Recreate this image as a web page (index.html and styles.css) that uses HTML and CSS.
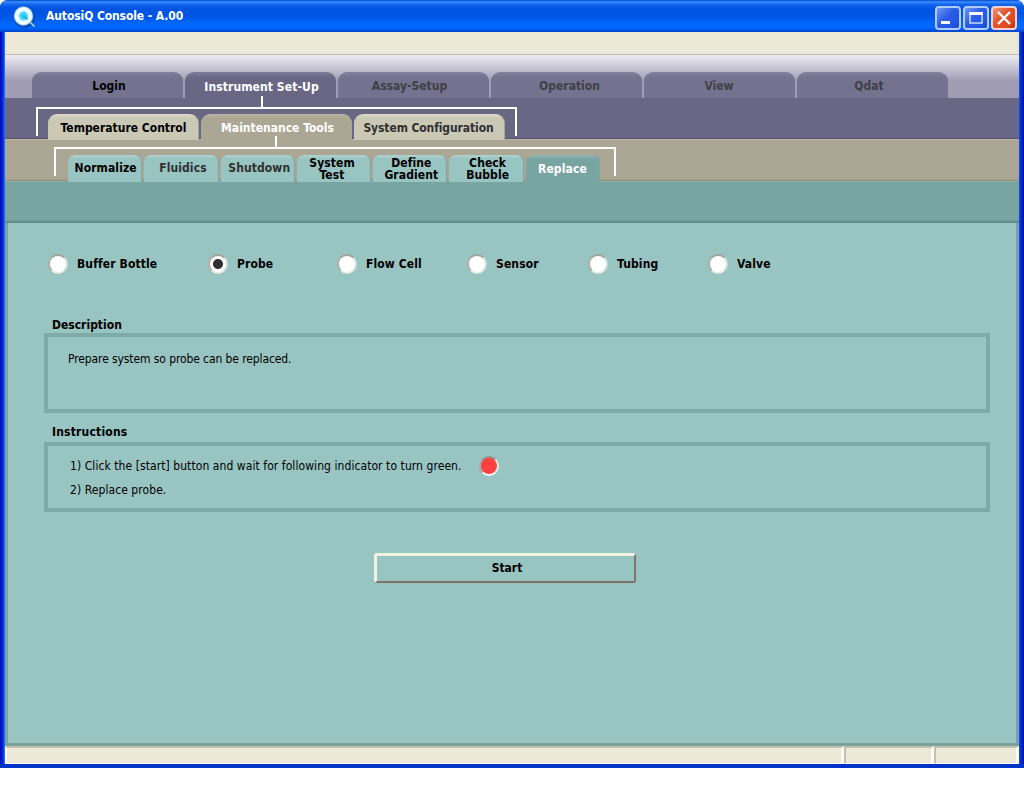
FILE: index.html
```
<!DOCTYPE html>
<html lang="en">
<head>
  <meta charset="UTF-8" />
  <title>AutosiQ Console - A.00</title>
  <link rel="stylesheet" href="styles.css">
</head>
<body>
  <div class="window">
    <header class="titlebar">
      <svg class="logo" width="24" height="24" viewBox="0 0 24 24">
        <defs>
          <radialGradient id="lens">
            <stop offset="0" stop-color="#28ccf4" />
            <stop offset="0.35" stop-color="#48d4fa" />
            <stop offset="0.55" stop-color="#e4faff" />
            <stop offset="0.8" stop-color="#ffffff" />
            <stop offset="1" stop-color="#7cbcf4" />
          </radialGradient>
        </defs>
        <circle cx="12.5" cy="13" r="11" fill="#0a50b8" />
        <path d="M18 18l4.500 4.500" stroke="#b4dcf8" stroke-width="1.500" />
        <circle cx="11.5" cy="12" r="9.7" fill="url(#lens)" />
        <path d="M11 12l4.500 3" stroke="#20b8e8" stroke-width="2.500" />
      </svg>
      <h1>AutosiQ Console - A.00</h1>
      <div class="controls">
        <button class="control" aria-label="Minimize">
          <svg width="24" height="22" viewBox="0 0 24 22"><path d="M5 15.5h9" stroke="#fff" stroke-width="3" /></svg>
        </button>
        <button class="control" aria-label="Maximize">
          <svg width="24" height="22" viewBox="0 0 24 22"><path d="M6 6h12v10H6z" fill="none" stroke="#c8dcff" stroke-width="1.5" /><path d="M5.300 6.500h13.400" stroke="#fff" stroke-width="3" /></svg>
        </button>
        <button class="control close" aria-label="Close">
          <svg width="24" height="22" viewBox="0 0 24 22"><path d="M6 5l12 12M18 5L6 17" stroke="#fff" stroke-width="2.400" /></svg>
        </button>
      </div>
    </header>

    <div class="client">
      <div class="menubar"></div>

      <nav class="main-tabs">
        <a class="tab login">Login</a>
        <a class="tab active">Instrument Set-Up</a>
        <a class="tab disabled assay">Assay-Setup</a>
        <a class="tab disabled operation">Operation</a>
        <a class="tab disabled view">View</a>
        <a class="tab disabled qdat">Qdat</a>
      </nav>

      <nav class="sub-tabs">
        <a class="tab">Temperature Control</a>
        <a class="tab active">Maintenance Tools</a>
        <a class="tab dim">System Configuration</a>
      </nav>

      <nav class="tool-tabs">
        <a class="tab">Normalize</a>
        <a class="tab dim">Fluidics</a>
        <a class="tab dim">Shutdown</a>
        <a class="tab double system">System<br>Test</a>
        <a class="tab double">Define<br>Gradient</a>
        <a class="tab double">Check<br>Bubble</a>
        <a class="tab active">Replace</a>
      </nav>

      <div class="spacer-band"></div>

      <main class="content">
        <div class="parts">
          <label class="part"><span class="radio"></span>Buffer Bottle</label>
          <label class="part"><span class="radio checked"></span>Probe</label>
          <label class="part"><span class="radio"></span>Flow Cell</label>
          <label class="part"><span class="radio"></span>Sensor</label>
          <label class="part"><span class="radio"></span>Tubing</label>
          <label class="part"><span class="radio"></span>Valve</label>
        </div>

        <h2>Description</h2>
        <section class="box description">
          <p>Prepare system so probe can be replaced.</p>
        </section>

        <h2 class="wide">Instructions</h2>
        <section class="box instructions">
          <p>1) Click the [start] button and wait for following indicator to turn green.<span class="indicator"></span></p>
          <p>2) Replace probe.</p>
        </section>

        <button class="start">Start</button>
      </main>

      <footer class="statusbar">
        <div></div>
        <div></div>
        <div></div>
      </footer>
    </div>
  </div>
</body>
</html>
```

FILE: styles.css
```
*,
*::before,
*::after {
  box-sizing: border-box;
}
body {
  margin: 0;
  background: #fff;
  font-family: "DejaVu Sans Condensed", "DejaVu Sans", sans-serif;
  font-stretch: condensed;
  font-size: 12px;
  color: #000;
}
.window {
  width: 1024px;
  height: 768px;
  border-radius: 8px 8px 0 0;
  overflow: hidden;
  background: linear-gradient(90deg, #0010b8 0, #0018d0 2px, #0a50f0 4px, #3c80f8 5px, #0a50f0 1019px, #0030d8 1021px, #000c94 1024px);
}
.titlebar {
  display: flex;
  align-items: center;
  height: 32px;
  padding: 0 7px 0 12px;
  background: linear-gradient(#0048d0 0, #3c90ff 2px, #1668f0 4px, #0054e0 8px, #0054e4 16px, #0066fc 23px, #0066fc 28px, #0044cc 32px);
}
.titlebar h1 {
  flex: 1;
  margin: 0 0 0 10px;
  font-size: 12px;
  line-height: 32px;
  letter-spacing: -0.1px;
  color: #fff;
}
.controls {
  display: flex;
  gap: 2px;
  margin-top: 4px;
}
.control {
  width: 26px;
  height: 24px;
  padding: 0;
  border: 2px solid #b0ccff;
  border-radius: 4px;
  background: linear-gradient(135deg, #7098f8, #2c5ce4 45%, #2058e8 75%, #1c48c0);
}
.control svg {
  display: block;
  margin: -1px;
}
.control.close {
  border-color: #f4d0cc;
  background: linear-gradient(135deg, #f09880, #e05028 45%, #e04c20 75%, #b03010);
}
.client {
  height: 736px;
  padding: 0 5px;
  border-bottom: 4px solid #0034c8;
  display: flex;
  flex-direction: column;
}
.menubar {
  height: 23px;
  background: #ece9d8;
  border-bottom: 1px solid #bdb9ac;
}
.tab {
  display: flex;
  align-items: center;
  justify-content: center;
  text-align: center;
  font-weight: bold;
  white-space: nowrap;
}
.main-tabs {
  display: flex;
  align-items: flex-end;
  gap: 2px;
  height: 43px;
  padding-left: 27px;
  background: linear-gradient(#eeedf2, #9f9cb4 26px);
}
.main-tabs .tab {
  width: 151px;
  height: 26px;
  padding-top: 2px;
  border-radius: 9px 9px 0 0;
  background: linear-gradient(#83819b, #757290 6px);
}
.main-tabs .active {
  background: linear-gradient(#7d7a96, #6a6785 6px);
  color: #fff;
  padding: 3px 0 0 2px;
  letter-spacing: 0.1px;
}
.main-tabs .disabled {
  color: #403f46;
}
.main-tabs .login {
  padding-left: 3px;
}
.main-tabs .assay {
  padding-right: 8px;
}
.main-tabs .operation {
  padding-left: 6px;
}
.main-tabs .view {
  padding-right: 1px;
}
.main-tabs .qdat {
  padding-right: 7px;
}
.sub-tabs,
.tool-tabs {
  position: relative;
  display: flex;
  align-items: flex-end;
}
.sub-tabs {
  height: 42px;
  gap: 2px;
  padding-left: 43px;
  background: linear-gradient(#6a6785 39px, #55516c 41px, #bbb7a5 41px);
}
.sub-tabs .tab {
  width: 151px;
  height: 26px;
  padding: 2px 0 0 1px;
  border-radius: 9px 9px 0 0;
  background: linear-gradient(#dedbca, #ccc8b6 4px);
  border-right: 1px solid #aaa796;
}
.sub-tabs .active {
  background: linear-gradient(#bbb7a6, #aba794 4px);
  color: #fff;
  padding-left: 3px;
}
.tab.dim {
  color: #303030;
}
.sub-tabs .dim {
  padding: 2px 1px 0 0;
  letter-spacing: -0.1px;
}
/* white brackets that tie a tab row to its parent tab */
.sub-tabs::before,
.tool-tabs::before {
  content: "";
  position: absolute;
  height: 29px;
  border: 2px solid #fff;
  border-bottom: 0;
}
.sub-tabs::after,
.tool-tabs::after {
  content: "";
  position: absolute;
  width: 2px;
  height: 11px;
  background: #fff;
}
.sub-tabs::before {
  left: 31px;
  top: 9px;
  width: 481px;
}
.sub-tabs::after {
  left: 256px;
  top: -2px;
}
.tool-tabs {
  height: 42px;
  gap: 2px;
  padding-left: 63px;
  background: linear-gradient(#aba794 39px, #8c8a78 41px, #86aca8 41px);
}
.tool-tabs .tab {
  width: 74.300px;
  height: 27px;
  padding: 0 0 1px 2px;
  border-radius: 7px 7px 0 0;
  background: linear-gradient(#b0d4d0, #98c4c2 4px);
  border-right: 1px solid #7fa5a2;
  line-height: 12px;
  letter-spacing: 0.100px;
}
.tool-tabs .dim {
  padding-left: 4px;
}
.tool-tabs .double {
  padding: 0 0 0 3px;
}
.tool-tabs .system {
  padding: 0 3px 0 0;
}
.tool-tabs .active {
  padding: 0;
  background: linear-gradient(#8fb5b1, #78a4a2 4px);
  color: #fff;
}
.tool-tabs::before {
  left: 49px;
  top: 7px;
  width: 562px;
}
.tool-tabs::after {
  left: 270px;
  top: -4px;
}
.spacer-band {
  height: 41px;
  background: linear-gradient(#78a4a2 38px, #5f8886 40px);
}
.content {
  flex: 1;
  padding: 31px 26px 0 36px;
  background: #98c4c2;
  border: solid #7ba19b;
  border-width: 0 3px 3px 3px;
  border-right-color: #7f9fb4;
}
.parts {
  display: grid;
  grid-template-columns: 160px 129px 130px 121px 120px 120px;
  margin-left: 4px;
}
.part {
  display: flex;
  align-items: center;
  gap: 9px;
  height: 20px;
  font-weight: bold;
  letter-spacing: 0.12px;
}
.radio,
.indicator {
  width: 20px;
  height: 20px;
  border: 2px solid;
  border-color: #a0a39d #d4e2dc #e4ece4 #b0aea8;
  border-radius: 50%;
  background: #fff;
}
.radio.checked {
  background: radial-gradient(circle, #303030 4.500px, #fff 5.500px);
}
h2 {
  margin: 0 0 0 8px;
  font-size: 12px;
  line-height: 16px;
}
h2.wide {
  letter-spacing: 0.200px;
}
.parts + h2 {
  margin-top: 43px;
}
.box {
  width: 946px;
  border: 4px solid #7eaaa8;
}
.box p {
  display: flex;
  align-items: center;
  margin: 0;
  line-height: 24px;
  height: 24px;
}
.description {
  height: 80px;
  margin: 0 0 11px;
  padding: 10px 20px;
  letter-spacing: -0.100px;
}
.instructions {
  height: 70px;
  margin-top: 2px;
  padding: 8px 22px;
  letter-spacing: 0.070px;
}
.indicator {
  margin-left: 17px;
  background: #ff4040;
  border-color: #98908c #e8eee8 #fff #a8a8a4;
}
.start {
  display: block;
  width: 262px;
  height: 30px;
  margin: 41px 0 0 330px;
  padding: 0 0 1px 3px;
  border: solid;
  border-width: 3px 2px 2px 3px;
  border-color: #f0f2e4 #7d746c #7d746c #f0f2e4;
  border-radius: 3px;
  background: #98c4c2;
  font: inherit;
  font-weight: bold;
}
.statusbar {
  display: grid;
  grid-template-columns: 839px 90px 1fr;
  height: 18px;
}
.statusbar div {
  background: #ece9d8;
  border: solid;
  border-width: 2px 3px 1px 2px;
  border-color: #c4c1b2 #fdfcf6 #fdfcf6 #c4c1b2;
}
.statusbar div:first-child {
  border-left-color: #fdfcf6;
}
```
